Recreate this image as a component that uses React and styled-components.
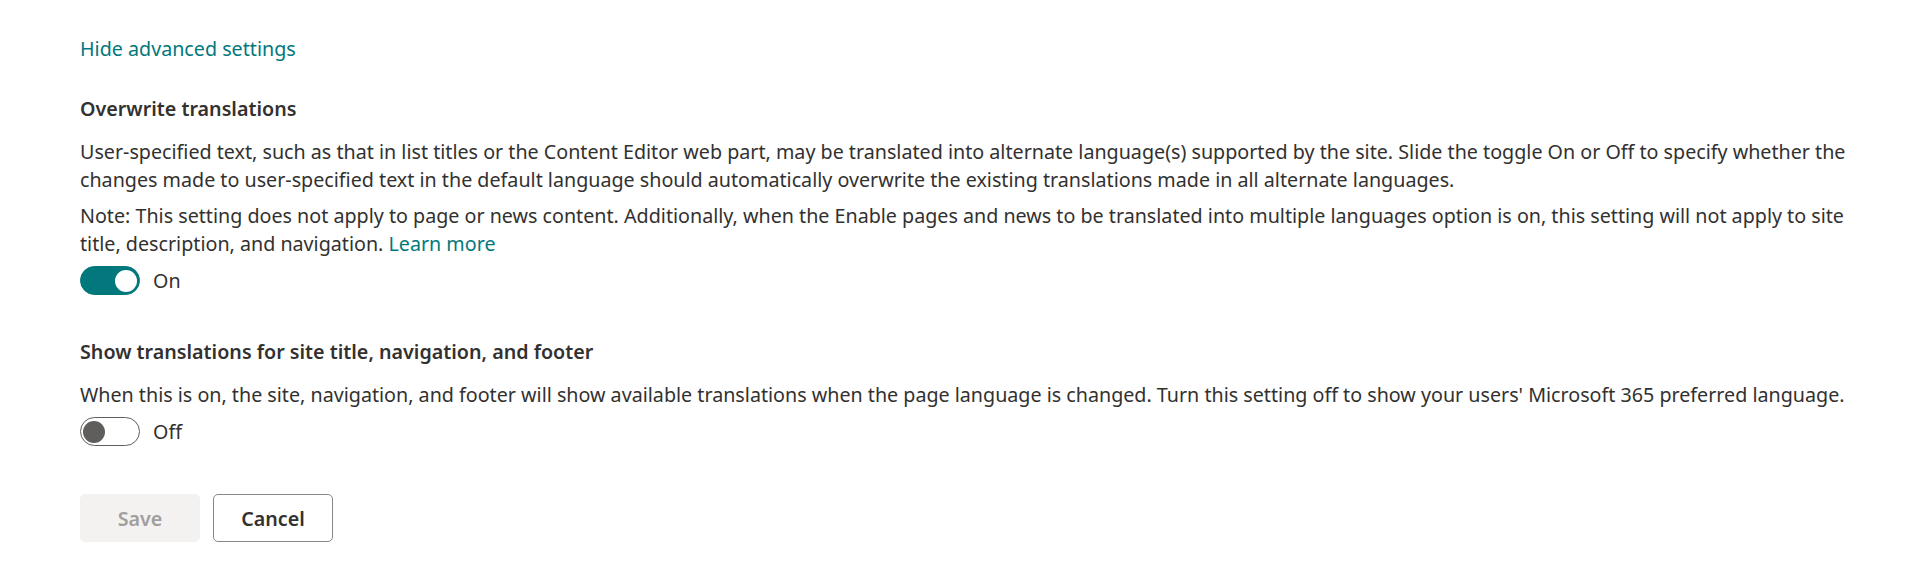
import { useState } from 'react';
import styled, { createGlobalStyle } from 'styled-components';

const Global = createGlobalStyle`
  body {
    margin: 0;
    background: #ffffff;
    font-family: "Noto Sans", "Open Sans", sans-serif;
    font-size: 19.7px;
    line-height: 28px;
    color: #323130;
  }
  * { box-sizing: border-box; }
`;

const Page = styled.main`
  padding: 35px 48px 0 80px;
`;

const Link = styled.a`
  color: #03787c;
  text-decoration: none;
  cursor: pointer;
  &:hover {
    text-decoration: underline;
  }
`;

const TopLink = styled(Link)`
  display: block;
  width: fit-content;
  margin-bottom: 32px;
`;

const Settings = styled.div`
  display: flex;
  flex-direction: column;
  gap: 43px;
`;

const Section = styled.section`
  display: flex;
  flex-direction: column;
`;

const Title = styled.h3`
  margin: 0 0 15px;
  font-size: inherit;
  font-weight: 600;
  color: #323130;
`;

const Desc = styled.p`
  margin: 0 0 8px;
`;

const ToggleRow = styled.label`
  display: flex;
  align-items: center;
  gap: 13px;
  cursor: pointer;
`;

const Track = styled.button`
  display: flex;
  align-items: center;
  justify-content: ${(p) => (p.$on ? 'flex-end' : 'flex-start')};
  width: 60px;
  height: 29px;
  padding: 0 2px;
  border-radius: 15px;
  border: 1px solid ${(p) => (p.$on ? '#03787c' : '#605e5c')};
  background: ${(p) => (p.$on ? '#03787c' : '#ffffff')};
  cursor: pointer;
`;

const Knob = styled.span`
  width: 22px;
  height: 22px;
  border-radius: 50%;
  background: ${(p) => (p.$on ? '#ffffff' : '#605e5c')};
`;

const Buttons = styled.div`
  display: flex;
  gap: 13px;
  margin-top: 48px;
`;

const Button = styled.button`
  width: 120px;
  height: 48px;
  border-radius: 5px;
  font-family: inherit;
  font-size: 19.7px;
  font-weight: 600;
  border: 1px solid ${(p) => (p.disabled ? '#f3f2f1' : '#8a8886')};
  background: ${(p) => (p.disabled ? '#f3f2f1' : '#ffffff')};
  color: ${(p) => (p.disabled ? '#a19f9d' : '#323130')};
  cursor: ${(p) => (p.disabled ? 'default' : 'pointer')};
`;

function Toggle({ on, onChange }) {
  return (
    <ToggleRow>
      <Track $on={on} role="switch" aria-checked={on} onClick={() => onChange(!on)}>
        <Knob $on={on} />
      </Track>
      <span>{on ? 'On' : 'Off'}</span>
    </ToggleRow>
  );
}

export default function App() {
  const [overwrite, setOverwrite] = useState(true);
  const [showTranslations, setShowTranslations] = useState(false);

  return (
    <>
      <Global />
      <Page>
        <TopLink>Hide advanced settings</TopLink>
        <Settings>
          <Section>
            <Title>Overwrite translations</Title>
            <Desc>
              User-specified text, such as that in list titles or the Content Editor web part, may be
              translated into alternate language(s) supported by the site. Slide the toggle On or Off to
              specify whether the changes made to user-specified text in the default language should
              automatically overwrite the existing translations made in all alternate languages.
            </Desc>
            <Desc>
              Note: This setting does not apply to page or news content. Additionally, when the Enable
              pages and news to be translated into multiple languages option is on, this setting will not
              apply to site title, description, and navigation. <Link>Learn more</Link>
            </Desc>
            <Toggle on={overwrite} onChange={setOverwrite} />
          </Section>
          <Section>
            <Title>Show translations for site title, navigation, and footer</Title>
            <Desc>
              When this is on, the site, navigation, and footer will show available translations when the
              page language is changed. Turn this setting off to show your users' Microsoft 365 preferred
              language.
            </Desc>
            <Toggle on={showTranslations} onChange={setShowTranslations} />
          </Section>
        </Settings>
        <Buttons>
          <Button disabled>Save</Button>
          <Button>Cancel</Button>
        </Buttons>
      </Page>
    </>
  );
}
